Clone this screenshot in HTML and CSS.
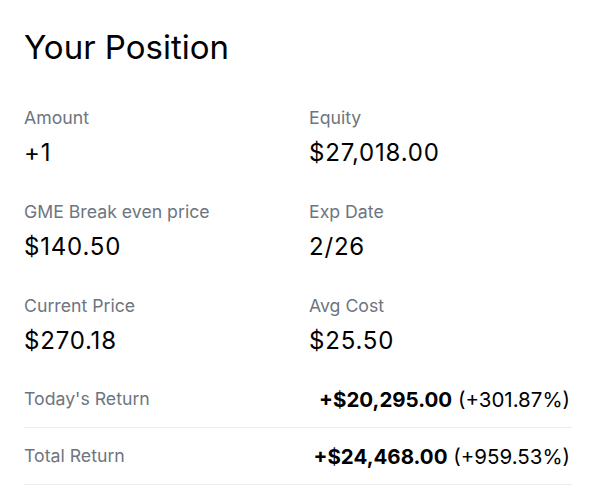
FILE: index.html
```html
<!DOCTYPE html>
<html>
<head>
<meta charset="utf-8">
<link rel="stylesheet" href="styles.css">
</head>
<body>
<div class="page">
  <h1 class="title">Your Position</h1>
  <div class="grid">
    <div class="cell"><div class="label">Amount</div><div class="value">+1</div></div>
    <div class="cell"><div class="label">Equity</div><div class="value">$27,018.00</div></div>
    <div class="cell"><div class="label">GME Break even price</div><div class="value">$140.50</div></div>
    <div class="cell"><div class="label">Exp Date</div><div class="value">2/26</div></div>
    <div class="cell"><div class="label">Current Price</div><div class="value">$270.18</div></div>
    <div class="cell"><div class="label">Avg Cost</div><div class="value">$25.50</div></div>
  </div>
  <div class="rows">
    <div class="row"><span class="label">Today's Return</span><span class="ret"><b>+$20,295.00</b> (+301.87%)</span></div>
    <div class="row"><span class="label">Total Return</span><span class="ret"><b>+$24,468.00</b> (+959.53%)</span></div>
  </div>
</div>
</body>
</html>
```
FILE: styles.css
```css
html, body {
  margin: 0;
  padding: 0;
  background: #ffffff;
}
body {
  font-family: Inter, "Noto Sans", sans-serif;
  color: #000;
}
.page {
  padding: 24px 24px 0 24px;
  width: 548px;
}
.title {
  margin: 0;
  font-size: 33px;
  font-weight: 400;
  line-height: 46px;
  letter-spacing: 0;
}
.grid {
  display: grid;
  grid-template-columns: 285px 1fr;
  margin-top: 36px;
  row-gap: 31px;
}
.label {
  font-size: 17.7px;
  color: #6d7580;
  line-height: 24px;
}
.value {
  font-size: 24px;
  line-height: 32px;
  margin-top: 7px;
  letter-spacing: 0.8px;
}
.rows {
  margin-top: 14px;
}
.row {
  display: flex;
  justify-content: space-between;
  align-items: center;
  height: 56px;
  border-bottom: 1px solid #eceef0;
}
.ret {
  font-size: 20.5px;
  color: #000;
  padding-right: 2px;
}
.ret b {
  font-weight: 700;
}
```
